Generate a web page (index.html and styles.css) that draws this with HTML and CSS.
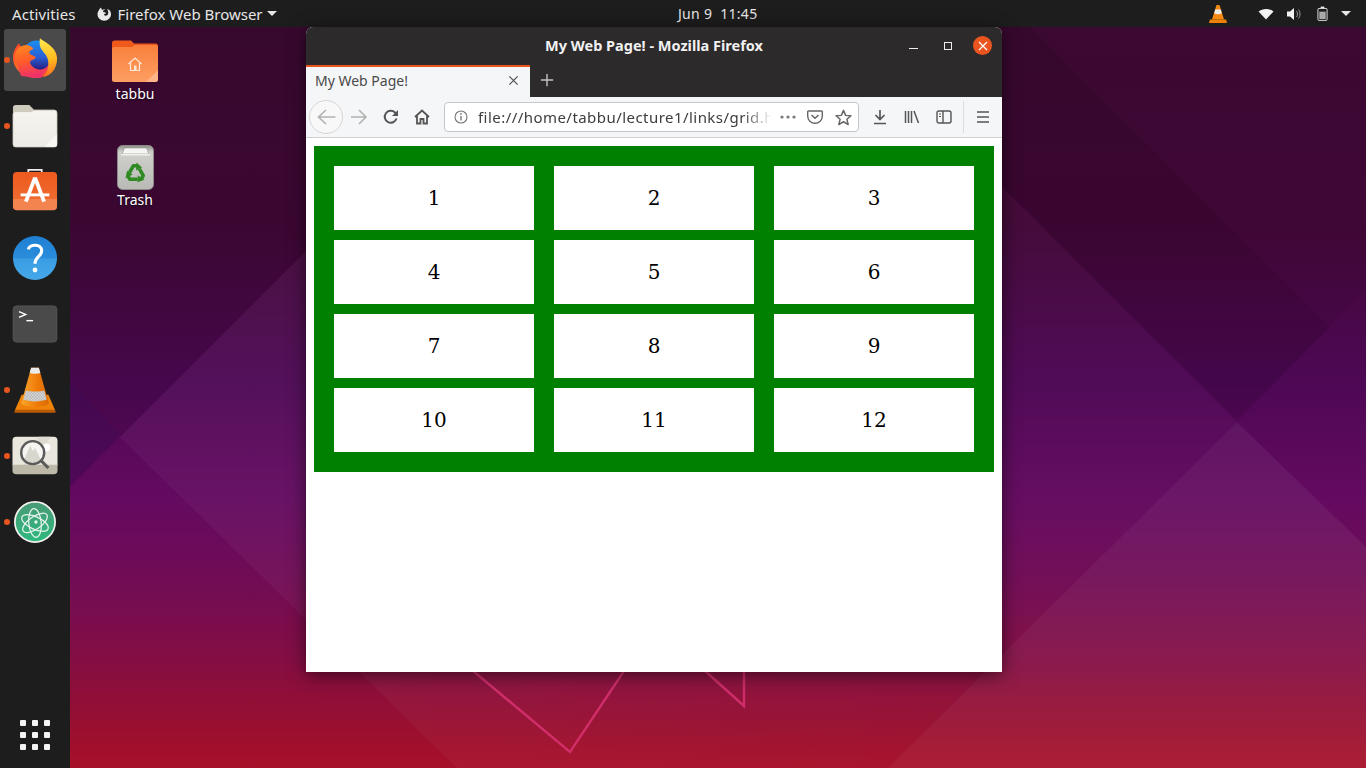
FILE: index.html
```html
<!DOCTYPE html>
<html lang="en">
<head>
<meta charset="utf-8">
<title>My Web Page!</title>
<link rel="stylesheet" href="styles.css">
</head>
<body>
<div class="screen">
  <svg class="wallpaper" viewBox="0 0 1366 768" preserveAspectRatio="none" aria-hidden="true">
    <defs>
      <linearGradient id="wall" x1="0" y1="0" x2="0" y2="1">
        <stop offset="0" stop-color="#3e0a34"/>
        <stop offset="0.3" stop-color="#420838"/>
        <stop offset="0.5" stop-color="#4e0855"/>
        <stop offset="0.65" stop-color="#640a60"/>
        <stop offset="0.75" stop-color="#700c56"/>
        <stop offset="0.85" stop-color="#820e45"/>
        <stop offset="0.93" stop-color="#950f33"/>
        <stop offset="1" stop-color="#a81028"/>
      </linearGradient>
      <linearGradient id="veil" gradientUnits="userSpaceOnUse" x1="300" y1="0" x2="1000" y2="0">
        <stop offset="0" stop-color="#fff" stop-opacity="0.035"/>
        <stop offset="1" stop-color="#fff" stop-opacity="0.015"/>
      </linearGradient>
    </defs>
    <rect width="1366" height="768" fill="url(#wall)"/>
    <polygon points="70,0 557,0 70,487" fill="#000" opacity="0.1"/>
    <polygon points="70,382 120,435 70,487" fill="#20106a" opacity="0.12"/>
    <polygon points="815,0 1366,0 1366,290 1237,419" fill="#000" opacity="0.04"/>
    <polygon points="815,0 1003,0 1330,327 1237,422" fill="#000" opacity="0.07"/>
    <polygon points="120,437 557,0 815,0 1237,422 888,768 457,768" fill="url(#veil)"/>
    <polygon points="1237,422 1366,547 1366,768 888,768" fill="#fff" opacity="0.055"/>
    <polyline points="460,660 570,752 630,662" fill="none" stroke="#d93372" stroke-width="2.4" stroke-opacity="0.85"/>
    <polyline points="704,670 744,706 744,664" fill="none" stroke="#d93372" stroke-width="2.4" stroke-opacity="0.85"/>
  </svg>

  <header class="topbar">
    <div class="topbar-left">
      <span class="activities">Activities</span>
      <span class="app-menu">
        <svg class="ff-mono" viewBox="0 0 16 16" aria-hidden="true">
          <path d="M5 1.500 6 4c1-.6 2.200-.8 3.400-.5C8 3.600 7 4.500 7 5.500c.6.8 1.800.6 2.500.9.700.4.300 1.200-.3 1.400l-1 .3c-.3.9.400 1.700 1.500 1.700 1.300 0 2.600-1.300 2.600-3 0-1.500-.6-2.700-1.300-3.700C13.800 3.700 15 5.700 15 8.300c0 3.600-2.900 6.400-6.700 6.400C4.500 14.700 1.500 12 1.500 8.300c0-1.500.5-2.800 1.300-3.800C3 3.400 3.900 2.300 5 1.500Z" fill="#e9e9e9"/>
        </svg>
        <span>Firefox Web Browser</span>
        <span class="caret"></span>
      </span>
    </div>
    <div class="clock">Jun 9&nbsp;&nbsp;11:45</div>
    <div class="tray">
      <svg class="tray-vlc" viewBox="0 0 20 22" aria-hidden="true">
        <path d="M8.300 1h3.400l5 16H3.300Z" fill="#f58a12"/>
        <path d="M6.900 6h6.200l1.100 4.500c-2.400 1-6 1-8.400 0Z" fill="#ececec"/>
        <path d="M1 17h18l1 4H0Z" fill="#ee8108"/>
      </svg>
      <svg class="tray-icon" viewBox="0 0 16 16" aria-hidden="true"><path d="M0.500 5.500C4.500 2 11.500 2 15.500 5.500L8 13.500Z" fill="#f2f2f2"/></svg>
      <svg class="tray-icon sound" viewBox="0 0 16 16" aria-hidden="true"><path d="M1 5.500h3L8 2v12L4 10.500H1Z" fill="#f2f2f2"/><path d="M10.500 5c1.400 1.700 1.400 4.300 0 6M12.500 3.500c2 2.500 2 6.500 0 9" fill="none" stroke="#9a9a9a" stroke-width="1"/></svg>
      <svg class="tray-battery" viewBox="0 0 12 16" aria-hidden="true"><path d="M4 .5h4v1.500H4Z" fill="#eee"/><rect x="1" y="2.500" width="10" height="13" rx="1" fill="none" stroke="#eee"/><rect x="2.500" y="6" width="7" height="8" fill="#aaa"/></svg>
      <span class="caret"></span>
    </div>
  </header>

  <nav class="dock">
    <div class="dock-item active"><i class="pip"></i>
      <svg viewBox="0 0 48 48" class="dock-icon big" aria-hidden="true">
        <defs>
          <linearGradient id="ffo" x1="0.1" y1="0.1" x2="0.7" y2="1"><stop offset="0" stop-color="#ff4a2e"/><stop offset="0.45" stop-color="#ff6b25"/><stop offset="0.75" stop-color="#f0336f"/><stop offset="1" stop-color="#f4582a"/></linearGradient>
          <linearGradient id="ffy" x1="0.4" y1="0" x2="0.5" y2="1"><stop offset="0" stop-color="#ffe54d"/><stop offset="0.55" stop-color="#ffbd1f"/><stop offset="1" stop-color="#ff6d1f"/></linearGradient>
          <linearGradient id="ffb" x1="0.5" y1="0" x2="0.5" y2="1"><stop offset="0" stop-color="#1a8eef"/><stop offset="0.55" stop-color="#2b5fd4"/><stop offset="1" stop-color="#261a7a"/></linearGradient>
          <linearGradient id="ffh" x1="0.2" y1="0" x2="0.4" y2="1"><stop offset="0" stop-color="#ff8a1f"/><stop offset="0.5" stop-color="#ff5a2a"/><stop offset="1" stop-color="#ef2f6c"/></linearGradient>
        </defs>
        <path d="M8 7.300C9 10 10 11 11 12c4-4 10-5 13-5 12 0 22 6 22 15s-9.500 20-22 20C12 42 2 33 2 21.500 2 16 4.500 11 8 7.300Z" fill="url(#ffo)"/>
        <circle cx="26" cy="19.500" r="15" fill="url(#ffb)"/>
        <path d="M4 20C4 14 8 10 15 9c4 .5 6 1.500 7.500 4-3.500 1-5 3-3.500 5 2 2 6 1.500 5.500 4-1.500 2.500-5.500 1.500-5.500 4.500 1 4.500 8 9 15 6.500l-4 9-20-2Z" fill="url(#ffh)"/>
        <path d="M29 2.300c4 3.700 16 7.700 17 19.700.5 10-6 18-14 19 5-5 6-11 5-17-1-6-7-9-8-14-.5-3-.5-6 0-7.700Z" fill="url(#ffy)"/>
      </svg>
    </div>
    <div class="dock-item"><i class="pip"></i>
      <svg viewBox="0 0 48 48" class="dock-icon" aria-hidden="true">
        <defs><linearGradient id="fileb" x1="0" y1="0" x2="0" y2="1"><stop offset="0" stop-color="#f6f4ee"/><stop offset="1" stop-color="#ecebe5"/></linearGradient></defs>
        <path d="M1 5a3 3 0 0 1 3-3h14l5 5h21a3 3 0 0 1 3 3v8H1Z" fill="#cfcbbd"/>
        <path d="M1 12a3 3 0 0 1 3-3h16l3-1.500h21a3 3 0 0 1 3 3V43a3 3 0 0 1-3 3H4a3 3 0 0 1-3-3Z" fill="url(#fileb)" stroke="#c6c3b8" stroke-width=".7"/>
        <path d="M47 32v11a3 3 0 0 1-3 3H34Z" fill="#fff" opacity=".6"/>
      </svg>
    </div>
    <div class="dock-item">
      <svg viewBox="0 0 48 48" class="dock-icon" aria-hidden="true">
        <defs><linearGradient id="store" x1="0" y1="0" x2="0" y2="1"><stop offset="0" stop-color="#ee5a20"/><stop offset="0.7" stop-color="#f06a2e"/><stop offset="0.71" stop-color="#f3824e"/><stop offset="1" stop-color="#f38552"/></linearGradient></defs>
        <path d="M17 5V1h14v4" fill="none" stroke="#eee" stroke-width="1.800"/>
        <rect x="1" y="3" width="46" height="40" rx="4" fill="url(#store)"/>
        <path d="M24 9l-9.500 25M24 9l9.500 25" fill="none" stroke="#fff" stroke-width="4"/>
        <path d="M9 27h30" stroke="#fff" stroke-width="3"/>
      </svg>
    </div>
    <div class="dock-item">
      <svg viewBox="0 0 48 48" class="dock-icon" aria-hidden="true">
        <defs><linearGradient id="help" x1="0" y1="0" x2="0" y2="1"><stop offset="0" stop-color="#1f7fd3"/><stop offset="0.5" stop-color="#2a8ddb"/><stop offset="0.52" stop-color="#3a9de3"/><stop offset="1" stop-color="#46a8ea"/></linearGradient></defs>
        <circle cx="24" cy="24" r="23" fill="url(#help)"/>
        <path d="M17 15c1.500-6 14-6 14 1.500 0 6-7 6-7 13.500" fill="none" stroke="#fff" stroke-width="3.300"/>
        <circle cx="24" cy="36.500" r="2.500" fill="#fff"/>
      </svg>
    </div>
    <div class="dock-item">
      <svg viewBox="0 0 48 48" class="dock-icon" aria-hidden="true">
        <rect x="1" y="5" width="46" height="38" rx="4" fill="#4a4a4a" stroke="#5c5c5c" stroke-width=".6"/>
        <path d="M7.300 11l7 3-7 3" fill="none" stroke="#fff" stroke-width="1.500"/>
        <path d="M15 20.500h7" stroke="#fff" stroke-width="1.500"/>
      </svg>
    </div>
    <div class="dock-item"><i class="pip"></i>
      <svg viewBox="0 0 48 48" class="dock-icon" aria-hidden="true">
        <defs>
          <linearGradient id="cone" x1="0" y1="0" x2="1" y2="0"><stop offset="0" stop-color="#f9a52b"/><stop offset="0.6" stop-color="#ef7a07"/><stop offset="1" stop-color="#d96a04"/></linearGradient>
          <pattern id="check" width="3" height="3" patternUnits="userSpaceOnUse"><rect width="3" height="3" fill="#e6e6e6"/><rect width="1.500" height="1.500" fill="#a8a8a8"/><rect x="1.500" y="1.500" width="1.500" height="1.500" fill="#a8a8a8"/></pattern>
        </defs>
        <path d="M3 45 10 29h28l7 16Z" fill="#ef8208"/>
        <path d="M3 44.500h42l.5 3.200H2.500Z" fill="#b85a05"/>
        <path d="M20 .7h8L38.500 38c-5 4.500-24 4.500-29 0Z" fill="url(#cone)"/>
        <path d="M20 .7h8l1.600 5.600c-3 1-8.200 1-11.200 0Z" fill="#eaeaea"/>
        <path d="M14.500 24.500c4 1.500 15 1.500 19 0l2.700 9.500c-5.500 2.500-18.900 2.500-24.400 0Z" fill="url(#check)"/>
      </svg>
    </div>
    <div class="dock-item"><i class="pip"></i>
      <svg viewBox="0 0 48 48" class="dock-icon" aria-hidden="true">
        <path d="M.5 8a4 4 0 0 1 4-4h39a4 4 0 0 1 4 4v26H.5Z" fill="#e8e6dd"/>
        <path d="M28 4h12L24 34H12Z" fill="#dedbd0"/>
        <path d="M.5 33h47v6a4 4 0 0 1-4 4h-39a4 4 0 0 1-4-4Z" fill="#bdb8a8"/>
        <circle cx="36" cy="15" r="4" fill="#fff"/>
        <circle cx="21.600" cy="20.500" r="12" fill="#f6f5f2"/>
        <path d="M12 29l7-16 3 6 2-4 6 13a12 12 0 0 1-18 1Z" fill="#d9d7cd"/>
        <circle cx="21.600" cy="20.500" r="12" fill="none" stroke="#5a5a5a" stroke-width="2.500"/>
        <path d="M30.500 29 38 36.500" stroke="#5a5a5a" stroke-width="3.200"/>
      </svg>
    </div>
    <div class="dock-item"><i class="pip"></i>
      <svg viewBox="0 0 48 48" class="dock-icon" aria-hidden="true">
        <defs><linearGradient id="atom" x1="0" y1="0" x2="0" y2="1"><stop offset="0" stop-color="#4a9a74"/><stop offset="1" stop-color="#2cb97f"/></linearGradient></defs>
        <circle cx="24" cy="24" r="21" fill="url(#atom)" stroke="#f1f1ee" stroke-width="1.800"/>
        <g fill="none" stroke="#e6f3ec" stroke-width="1.300">
          <ellipse cx="24" cy="25" rx="15" ry="6.500" transform="rotate(25 24 25)"/>
          <ellipse cx="24" cy="25" rx="15" ry="6.500" transform="rotate(-35 24 25)"/>
          <ellipse cx="24" cy="25" rx="15" ry="6.500" transform="rotate(85 24 25)"/>
        </g>
        <circle cx="25" cy="24" r="1.800" fill="#e6f3ec"/>
      </svg>
    </div>
    <div class="dock-grid" aria-hidden="true">
      <i></i><i></i><i></i><i></i><i></i><i></i><i></i><i></i><i></i>
    </div>
  </nav>

  <div class="desk-icon home-icon">
    <svg viewBox="0 0 46 42" class="desk-svg" aria-hidden="true">
      <defs><linearGradient id="folder" x1="0" y1="0" x2="0" y2="1"><stop offset="0" stop-color="#f9803c"/><stop offset="1" stop-color="#fd9f63"/></linearGradient></defs>
      <path d="M0 3a2.500 2.500 0 0 1 2.500-2.500H19l3 3h21.500A2.500 2.500 0 0 1 46 6v8H0Z" fill="#ef5a1c"/>
      <path d="M0 9a2 2 0 0 1 2-2h18l3-2h21a2 2 0 0 1 2 2v32.500a2.500 2.500 0 0 1-2.500 2.500h-41A2.500 2.500 0 0 1 0 39.500Z" fill="url(#folder)"/>
      <path d="M46 30v9.500a2.500 2.500 0 0 1-2.500 2.500H34Z" fill="#fff" opacity=".25"/>
      <path d="M16.500 24 23 18l6.500 6M18.500 23v7.500h9V23" fill="none" stroke="#ffe8da" stroke-width="1.200"/>
      <rect x="22" y="25.500" width="2.500" height="5" fill="#ffe8da"/>
    </svg>
    <span class="desk-label">tabbu</span>
  </div>
  <div class="desk-icon trash-icon">
    <svg viewBox="0 0 37 45" class="desk-svg trash" aria-hidden="true">
      <defs><linearGradient id="bin" x1="0" y1="0" x2="0" y2="1"><stop offset="0" stop-color="#8e8e8b"/><stop offset="0.15" stop-color="#cfcfcc"/><stop offset="1" stop-color="#b9b9b6"/></linearGradient></defs>
      <rect x=".5" y=".5" width="36" height="44" rx="5" fill="url(#bin)" stroke="#8b8b88"/>
      <path d="M5 9 7.500 3h22L32 9Z" fill="#f5f5f3" stroke="#8f8f8c" stroke-width=".6"/>
      <path d="M4 9h29v1.500H4Z" fill="#efefec"/>
      <g>
        <path class="rec-line" d="M12.500 27.500 16.500 20.700H20"/><path class="rec-head" d="M19.500 17.500 25 22.500 19 25.500Z"/>
      </g>
      <g transform="rotate(120 18.500 28.500)">
        <path class="rec-line" d="M12.500 27.500 16.500 20.700H20"/><path class="rec-head" d="M19.500 17.500 25 22.500 19 25.500Z"/>
      </g>
      <g transform="rotate(240 18.500 28.500)">
        <path class="rec-line" d="M12.500 27.500 16.500 20.700H20"/><path class="rec-head" d="M19.500 17.500 25 22.500 19 25.500Z"/>
      </g>
    </svg>
    <span class="desk-label">Trash</span>
  </div>

  <main class="window">
    <div class="titlebar">
      <span class="win-title">My Web Page! - Mozilla Firefox</span>
      <div class="win-controls">
        <span class="win-min"></span>
        <span class="win-max"></span>
        <span class="win-close">
          <svg viewBox="0 0 10 10" aria-hidden="true"><path d="M1 1l8 8M9 1 1 9" stroke="#fff" stroke-width="1.200"/></svg>
        </span>
      </div>
    </div>
    <div class="tabstrip">
      <div class="tab">
        <span class="tab-title">My Web Page!</span>
        <svg class="tab-close" viewBox="0 0 12 12" aria-hidden="true"><path d="M1.500 1.500l9 9M10.500 1.500l-9 9" stroke="#555" stroke-width="1.400"/></svg>
      </div>
      <svg class="tab-new" viewBox="0 0 16 16" aria-hidden="true"><path d="M8 1v14M1 8h14" stroke="#c4c4c4" stroke-width="1.600"/></svg>
    </div>
    <div class="navbar">
      <span class="back-btn">
        <svg viewBox="0 0 19 18" aria-hidden="true"><path d="M18.500 9H1.500M9 2 1.500 9l7.500 7" fill="none" stroke="#b1b1b1" stroke-width="1.600"/></svg>
      </span>
      <svg class="nav-icon forward" viewBox="0 0 18 18" aria-hidden="true"><path d="M1 9h15M9 2l7 7-7 7" fill="none" stroke="#b1b1b1" stroke-width="1.600"/></svg>
      <svg class="nav-icon reload" viewBox="0 0 16 16" aria-hidden="true"><path d="M13.500 9.500A6 6 0 1 1 12 3.500L14.500 6" fill="none" stroke="#555" stroke-width="2"/><path d="M15 1v6H9Z" fill="#555"/></svg>
      <svg class="nav-icon home" viewBox="0 0 16 16" aria-hidden="true"><path d="M1 8 8 1.500 15 8M3 7v7.500h3.500V10h3v4.500H13V7" fill="none" stroke="#555" stroke-width="1.800"/></svg>
      <div class="urlbar">
        <svg class="info" viewBox="0 0 14 14" aria-hidden="true"><circle cx="7" cy="7" r="6" fill="none" stroke="#777" stroke-width="1.100"/><path d="M7 6v4.500" stroke="#777" stroke-width="1.400"/><circle cx="7" cy="3.900" r=".9" fill="#777"/></svg>
        <span class="url">file:///home/tabbu/lecture1/links/grid.html</span>
        <span class="url-actions">
          <svg class="dots" viewBox="0 0 16 4" aria-hidden="true"><circle cx="2" cy="2" r="1.600" fill="#777"/><circle cx="8" cy="2" r="1.600" fill="#777"/><circle cx="14" cy="2" r="1.600" fill="#777"/></svg>
          <svg class="pocket" viewBox="0 0 16 14" aria-hidden="true"><path d="M1.500 1h13a.8.8 0 0 1 .8.8V6a7.300 7.300 0 0 1-14.600 0V1.800A.8.8 0 0 1 1.500 1Z" fill="none" stroke="#666" stroke-width="1.400"/><path d="M4.500 5 8 8.300 11.500 5" fill="none" stroke="#666" stroke-width="1.500"/></svg>
          <svg class="star" viewBox="0 0 16 16" aria-hidden="true"><path d="M8 1.300 10 6l5 .4-3.800 3.300 1.200 5L8 12l-4.400 2.700 1.200-5L1 6.400 6 6Z" fill="none" stroke="#666" stroke-width="1.400" stroke-linejoin="round"/></svg>
        </span>
      </div>
      <div class="tools">
        <svg viewBox="0 0 16 16" aria-hidden="true"><path d="M8 1v9M3.500 6 8 10.500 12.500 6M2 14.500h12" fill="none" stroke="#555" stroke-width="1.700"/></svg>
        <svg viewBox="0 0 16 16" aria-hidden="true"><path d="M1.500 2v12M4.500 2v12M7.500 2v12M10 2l4.500 12" fill="none" stroke="#555" stroke-width="1.500"/></svg>
        <svg viewBox="0 0 16 16" aria-hidden="true"><rect x="1" y="2" width="14" height="12" rx="2" fill="none" stroke="#555" stroke-width="1.400"/><path d="M7 2v12" stroke="#555" stroke-width="1.400"/><path d="M3 5h2M3 7.500h2" stroke="#555"/></svg>
        <span class="tools-sep"></span>
        <svg viewBox="0 0 16 16" aria-hidden="true"><path d="M2 3h12M2 8h12M2 13h12" stroke="#555" stroke-width="1.600"/></svg>
      </div>
    </div>
    <div class="page">
      <div class="grid">
        <div class="cell">1</div><div class="cell">2</div><div class="cell">3</div>
        <div class="cell">4</div><div class="cell">5</div><div class="cell">6</div>
        <div class="cell">7</div><div class="cell">8</div><div class="cell">9</div>
        <div class="cell">10</div><div class="cell">11</div><div class="cell">12</div>
      </div>
    </div>
  </main>
</div>
</body>
</html>
```
FILE: styles.css
```css
* { box-sizing: border-box; }
html, body { margin: 0; padding: 0; height: 100%; overflow: hidden; }
body { font-family: "Noto Sans", "Open Sans", sans-serif; }

.screen { position: relative; width: 1366px; height: 768px; overflow: hidden; background: #3a0a38; }
.wallpaper { position: absolute; inset: 0; width: 100%; height: 100%; display: block; }

.topbar {
  position: absolute; left: 0; top: 0; width: 100%; height: 27px;
  background: #1d1d1d; color: #e6e6e6; font-size: 15px;
  display: grid; grid-template-columns: 678px auto 1fr; align-items: center;
}
.topbar-left { display: flex; align-items: center; padding-left: 12px; gap: 20px; }
.activities { letter-spacing: .1px; }
.app-menu { display: flex; align-items: center; gap: 6px; }
.app-menu .caret { margin-left: -2px; }
.ff-mono { width: 16px; height: 16px; }
.caret { display: inline-block; border: 5px solid transparent; border-top-color: #e6e6e6; border-bottom: 0; }
.clock { font-size: 14px; letter-spacing: .3px; }
.tray { display: flex; align-items: center; justify-content: flex-end; padding-right: 15px; }
.tray-vlc { width: 18px; height: 20px; margin-right: 31px; }
.tray-icon { width: 16px; height: 16px; margin-right: 12px; }
.tray-icon.sound { margin-right: 15px; }
.tray-battery { width: 11px; height: 15px; margin-right: 13px; }

.dock {
  position: absolute; left: 0; top: 27px; bottom: 0; width: 70px; background: #1d1d1d;
  display: flex; flex-direction: column; align-items: center; padding-top: 2px;
}
.dock-item { position: relative; width: 62px; height: 62px; flex: none; margin-bottom: 4px; border-radius: 3px; display: flex; align-items: center; justify-content: center; }
.dock-item.active { background: #4a4a4a; }
.pip { position: absolute; left: 0; top: 28px; width: 6px; height: 6px; border-radius: 50%; background: #e9541f; }
.dock-icon { width: 46px; height: 46px; display: block; }
.dock-icon.big { width: 48px; height: 48px; }
.dock-grid { margin-top: auto; margin-bottom: 18px; display: grid; grid-template-columns: repeat(3, 6px); gap: 6px; }
.dock-grid i { width: 6px; height: 6px; background: #f5f5f5; border-radius: 1px; }

.desk-icon { position: absolute; display: flex; flex-direction: column; align-items: center; width: 80px; color: #fff; font-size: 14px; text-shadow: 0 1px 2px rgba(0,0,0,.7); }
.home-icon { left: 95px; top: 40px; }
.trash-icon { left: 95px; top: 145px; }
.desk-svg { width: 46px; height: 42px; display: block; }
.desk-svg.trash { width: 37px; height: 45px; }
.desk-label { line-height: 19px; margin-top: 2px; }
.trash-icon .desk-label { margin-top: 0; }
.rec-line { fill: none; stroke: #2f8a22; stroke-width: 3.6; stroke-linejoin: round; }
.rec-head { fill: #2f8a22; }

.window {
  position: absolute; left: 306px; top: 27px; width: 696px; height: 645px;
  display: flex; flex-direction: column; background: #fff;
  border-radius: 7px 7px 0 0; overflow: hidden;
  box-shadow: 0 3px 18px rgba(0,0,0,.55);
}
.titlebar { position: relative; flex: none; height: 38px; background: #2c2a2b; display: flex; align-items: center; justify-content: center; padding-bottom: 2px; }
.win-title { color: #f1f1f1; font-size: 14.5px; font-weight: 700; }
.win-controls { position: absolute; right: 10px; top: 9px; display: flex; align-items: center; }
.win-min { width: 9px; height: 1px; background: #eee; margin-right: 26px; margin-top: 5px; }
.win-max { width: 8px; height: 8px; border: 1px solid #eee; margin-right: 21px; }
.win-close { width: 19px; height: 19px; border-radius: 50%; background: #e9541f; display: flex; align-items: center; justify-content: center; }
.win-close svg { width: 10px; height: 10px; display: block; }

.tabstrip { flex: none; height: 32px; background: #2c2a2b; display: flex; align-items: center; }
.tab {
  width: 224px; height: 32px; background: #f5f6f7; border-top: 2px solid #e9541f;
  display: flex; align-items: center; justify-content: space-between; padding: 0 11px 3px 9px;
  color: #4a4a4a; font-size: 14px;
}
.tab-close { width: 11px; height: 11px; display: block; }
.tab-new { width: 14px; height: 14px; margin: -2px 0 0 10px; }

.navbar {
  flex: none; height: 41px; background: #f5f6f7; border-bottom: 1px solid #cfd0d2;
  display: flex; align-items: center; padding-left: 3px;
}
.back-btn { width: 34px; height: 34px; border: 1px solid #d6d6d6; border-radius: 50%; background: #f8f8f8; display: flex; align-items: center; justify-content: center; flex: none; }
.back-btn svg { width: 19px; height: 18px; display: block; }
.nav-icon { display: block; flex: none; }
.forward { width: 18px; height: 18px; margin-left: 7px; }
.reload { width: 16px; height: 16px; margin-left: 15px; }
.home { width: 16px; height: 16px; margin-left: 15px; }
.urlbar {
  margin-left: 14px; width: 415px; height: 30px; flex: none; background: #fff;
  border: 1px solid #c5c6c9; border-radius: 4px; display: flex; align-items: center; padding: 0 6px 0 9px;
}
.info { width: 14px; height: 14px; flex: none; }
.url {
  margin-left: 10px; flex: 1; min-width: 0; overflow: hidden; white-space: nowrap;
  font-size: 15px; letter-spacing: .45px; color: #3d3d3d;
  -webkit-mask-image: linear-gradient(to right, #000 90%, transparent 100%);
  mask-image: linear-gradient(to right, #000 90%, transparent 100%);
}
.url-actions { display: flex; align-items: center; flex: none; margin-left: 8px; }
.dots { width: 16px; height: 4px; margin-right: 11px; }
.pocket { width: 16px; height: 14px; margin-right: 12px; }
.star { width: 17px; height: 17px; }
.tools { display: flex; align-items: center; margin-left: 13px; }
.tools svg { width: 16px; height: 16px; display: block; flex: none; margin-right: 16px; }
.tools svg:nth-child(3) { margin-right: 11px; }
.tools-sep { width: 1px; height: 32px; background: #dcdde0; margin-right: 11px; }

.page { flex: 1; background: #fff; padding: 8px; font-family: "DejaVu Serif", serif; }
.grid {
  background: #008000; padding: 20px; display: grid;
  grid-template-columns: repeat(3, 200px); grid-auto-rows: 64px; column-gap: 20px; row-gap: 10px;
}
.cell { background: #fff; display: flex; align-items: center; justify-content: center; font-size: 20px; color: #000; }
```
